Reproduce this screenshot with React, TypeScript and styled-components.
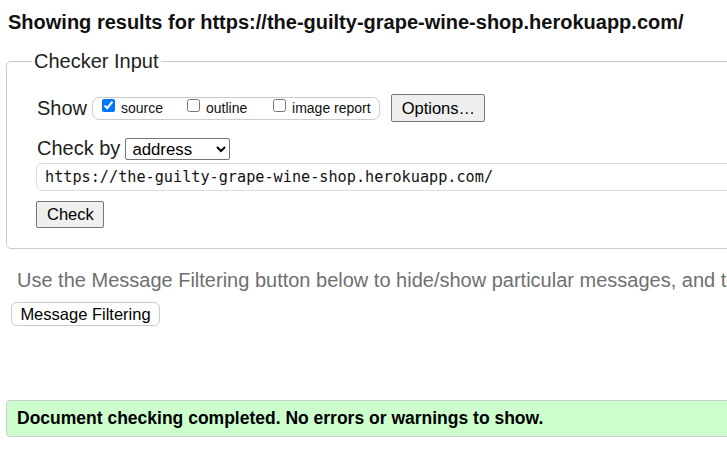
import React from "react";
import styled, { createGlobalStyle } from "styled-components";

const Global = createGlobalStyle`
  html, body { margin: 0; padding: 0; overflow: hidden; background: #fff; }
  body { font-family: "Liberation Sans", Arial, sans-serif; color: #000; }
`;

const Page = styled.div`
  width: 1000px;
  padding: 0 0 0 6px;
  box-sizing: border-box;
`;

const Heading = styled.h2`
  margin: 0;
  padding: 11px 0 0 2px;
  font-size: 20px;
  line-height: 23px;
  font-weight: bold;
  color: #111;
`;

const Fieldset = styled.fieldset`
  margin: 16px 0 0 0;
  padding: 21px 30px 20px 30px;
  border: 1px solid #ccc;
  border-radius: 5px;
`;

const Legend = styled.legend`
  font-size: 20px;
  line-height: 23px;
  color: #222;
  padding: 0 2px;
  margin-left: -5px;
`;

const Row = styled.div<{ $mt?: number }>`
  display: flex;
  align-items: center;
  gap: 6px;
  margin-top: ${(p) => p.$mt ?? 0}px;
`;

const Label = styled.span`
  font-size: 20px;
  line-height: 23px;
  color: #222;
`;

const Group = styled.div`
  display: flex;
  align-items: center;
  height: 21px;
  border: 1px solid #ccc;
  border-radius: 7px;
  padding: 0 8px 0 9px;
  margin-left: -1px;
`;

const CheckItem = styled.label<{ $w?: number }>`
  display: flex;
  align-items: center;
  width: ${(p) => (p.$w ? `${p.$w}px` : "auto")};
  font-size: 14px;
  color: #111;
  input {
    margin: 0 6px 0 0;
    width: 13px;
    height: 13px;
    accent-color: #0075ff;
    position: relative;
    top: -3px;
  }
`;

const Button = styled.button`
  font-family: "Liberation Sans", Arial, sans-serif;
  font-size: 16.5px;
  color: #000;
  background: #efefef;
  border: 1px solid #767676;
  border-radius: 2px;
  padding: 0 10px;
  margin: 0;
`;

const OptionsButton = styled(Button)`
  height: 28px;
  width: 94px;
  margin-left: 5px;
`;

const Select = styled.select`
  font-family: "Liberation Sans", Arial, sans-serif;
  font-size: 16.8px;
  height: 22px;
  width: 105px;
  border: 1px solid #767676;
  border-radius: 2px;
  background: #fff;
  color: #000;
  padding: 0 0 0 2px;
  margin-left: -1px;
`;

const UrlInput = styled.input`
  display: block;
  width: 100%;
  box-sizing: border-box;
  height: 28px;
  margin: 3px 0 0 -1px;
  padding: 0 8px;
  border: 1px solid #ddd;
  border-radius: 6px;
  font-family: "DejaVu Sans Mono", monospace;
  font-size: 15.2px;
  color: #111;
`;

const CheckButton = styled(Button)`
  display: block;
  height: 27px;
  width: 68px;
  margin: 10px 0 0 -1px;
`;

const Note = styled.p`
  margin: 20px 0 0 11px;
  font-size: 20px;
  line-height: 22px;
  color: #6f6f6f;
  white-space: nowrap;
`;

const FilterButton = styled.button`
  font-family: "Liberation Sans", Arial, sans-serif;
  font-size: 16.5px;
  color: #000;
  background: #fff;
  border: 1px solid #ccc;
  border-radius: 6px;
  height: 24px;
  width: 149px;
  padding: 0;
  margin: 11px 0 0 5px;
  display: block;
`;

const Success = styled.div`
  margin-top: 74px;
  height: 37px;
  box-sizing: border-box;
  display: flex;
  align-items: center;
  padding-left: 10px;
  background: #ccffcc;
  border: 1px solid #ccc;
  border-radius: 4px;
  font-size: 17.5px;
  font-weight: bold;
  color: #000;
`;

export default function App() {
  return (
    <>
      <Global />
      <Page>
        <Heading>Showing results for https://the-guilty-grape-wine-shop.herokuapp.com/</Heading>
        <Fieldset>
          <Legend>Checker Input</Legend>
          <Row>
            <Label>Show</Label>
            <Group>
              <CheckItem $w={85}>
                <input type="checkbox" defaultChecked />
                source
              </CheckItem>
              <CheckItem $w={86}>
                <input type="checkbox" />
                outline
              </CheckItem>
              <CheckItem>
                <input type="checkbox" />
                image report
              </CheckItem>
            </Group>
            <OptionsButton>Options…</OptionsButton>
          </Row>
          <Row $mt={15}>
            <Label>Check by</Label>
            <Select defaultValue="address">
              <option value="address">address</option>
              <option value="upload">file upload</option>
              <option value="input">text input</option>
            </Select>
          </Row>
          <UrlInput type="text" defaultValue="https://the-guilty-grape-wine-shop.herokuapp.com/" />
          <CheckButton>Check</CheckButton>
        </Fieldset>
        <Note>
          Use the Message Filtering button below to hide/show particular messages, and to see total counts of errors and warnings.
        </Note>
        <FilterButton>Message Filtering</FilterButton>
        <Success>Document checking completed. No errors or warnings to show.</Success>
      </Page>
    </>
  );
}
